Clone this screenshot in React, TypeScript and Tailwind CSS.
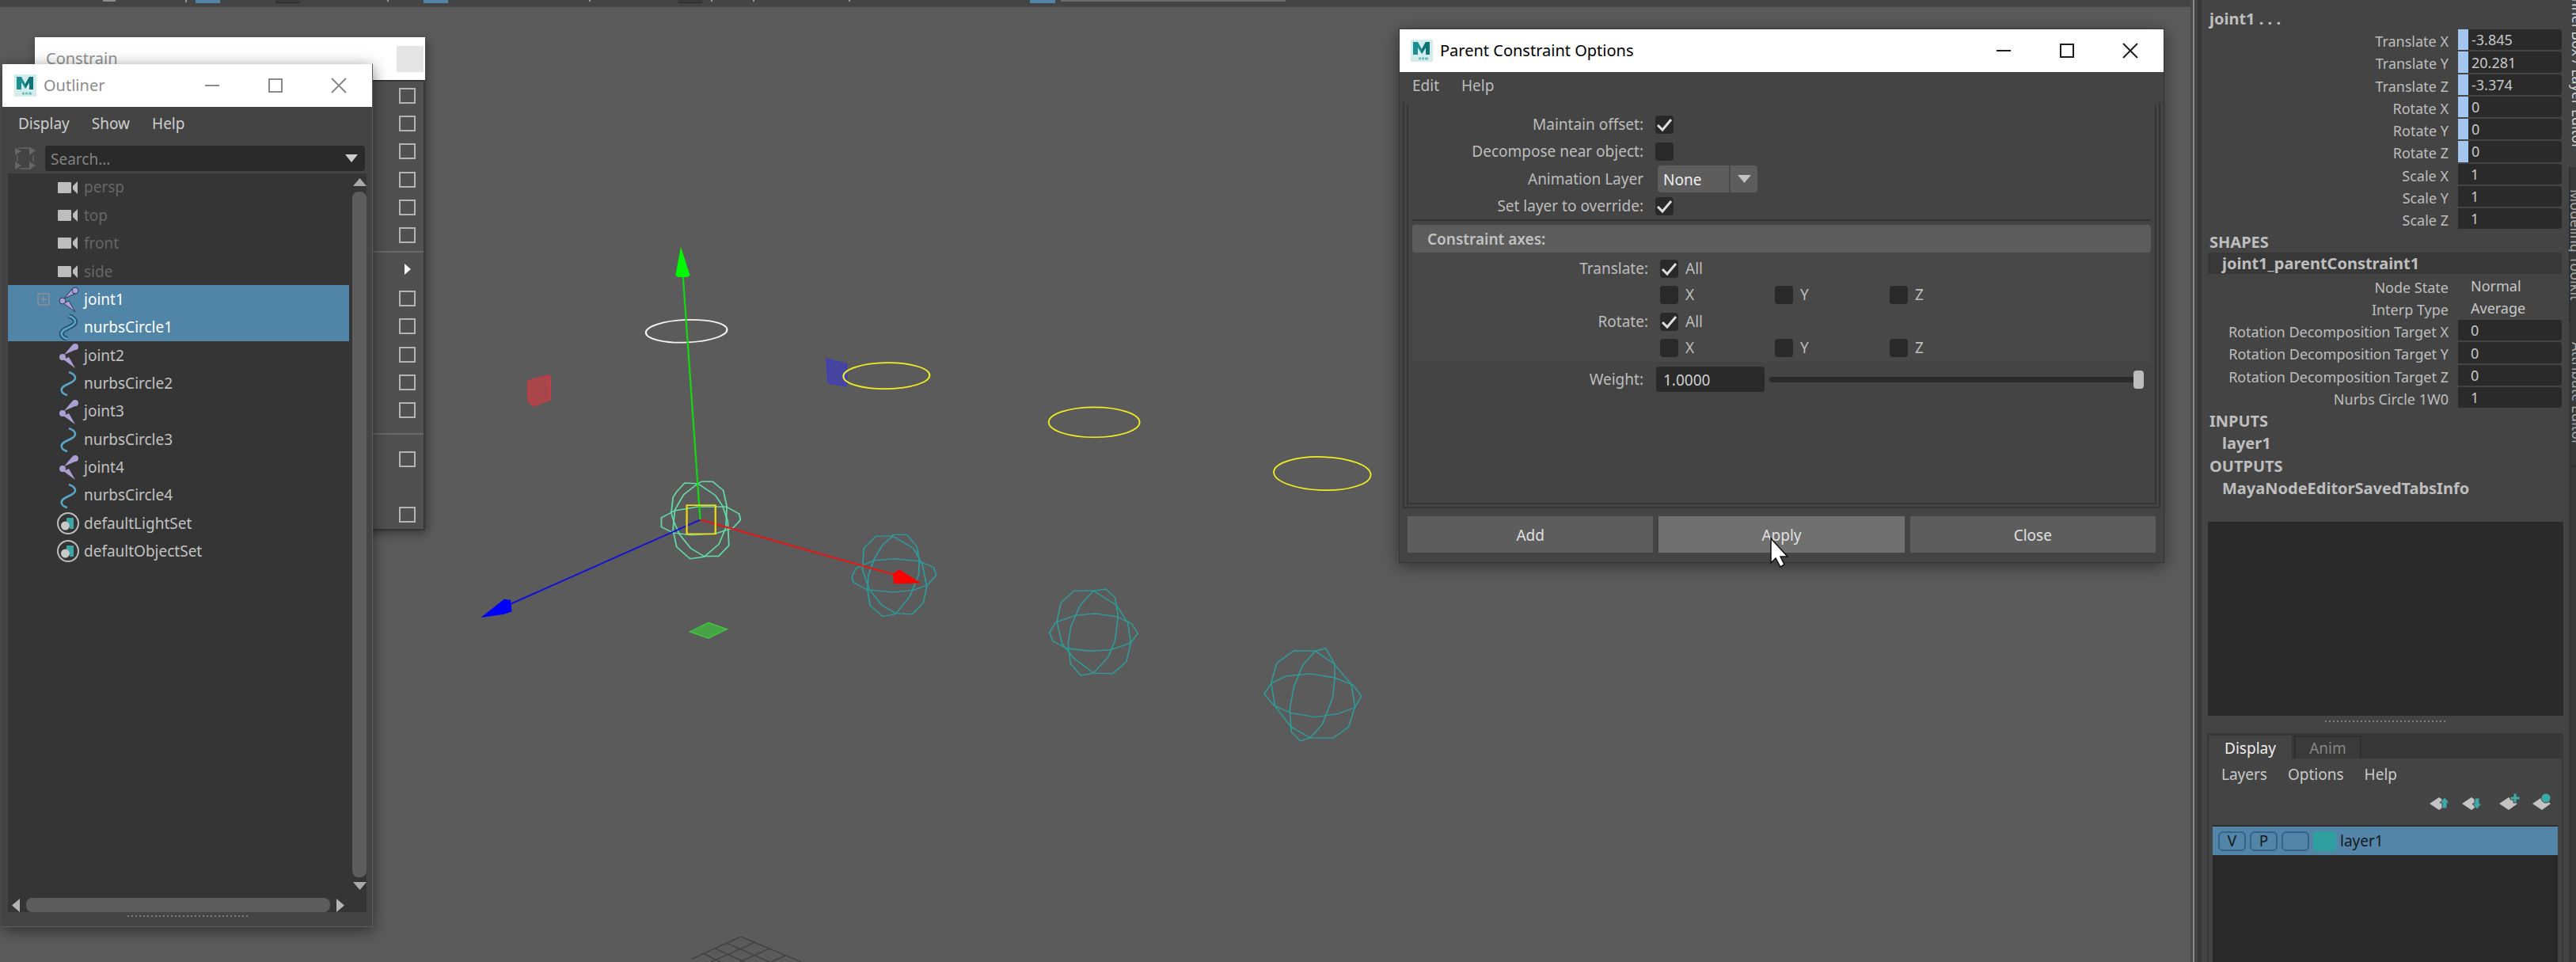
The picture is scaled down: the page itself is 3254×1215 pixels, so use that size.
import React from "react";

const NODES = [
  { name: "persp", kind: "camera" },
  { name: "top", kind: "camera" },
  { name: "front", kind: "camera" },
  { name: "side", kind: "camera" },
  { name: "joint1", kind: "joint", selected: true, expandable: true },
  { name: "nurbsCircle1", kind: "curve", selected: true },
  { name: "joint2", kind: "joint" },
  { name: "nurbsCircle2", kind: "curve" },
  { name: "joint3", kind: "joint" },
  { name: "nurbsCircle3", kind: "curve" },
  { name: "joint4", kind: "joint" },
  { name: "nurbsCircle4", kind: "curve" },
  { name: "defaultLightSet", kind: "set" },
  { name: "defaultObjectSet", kind: "set" },
];

function NodeIcon({ kind, selected }: { kind: string; selected?: boolean }) {
  if (kind === "camera")
    return (
      <svg className="h-[34px] w-7" viewBox="0 0 28 34" aria-hidden="true">
        <rect x="1" y="10" width="17" height="14" rx="1" fill="#bdbdbd" />
        <path d="M26 9v16l-6-6v-4z" fill="#bdbdbd" />
      </svg>
    );
  if (kind === "joint")
    return (
      <svg className="h-[34px] w-7" viewBox="0 0 28 34" aria-hidden="true">
        <g fill="#ab9fd4" stroke={selected ? "#2b3a55" : "none"} strokeWidth="1">
          <path d="M9 16L19 4l6 5z" />
          <path d="M8 22l7-3 8 14z" />
          <circle cx="23" cy="6" r="4" />
          <circle cx="7" cy="19" r="4" />
        </g>
      </svg>
    );
  if (kind === "curve")
    return (
      <svg className="h-[34px] w-7" viewBox="0 0 28 34" fill="none" aria-hidden="true">
        {selected && (
          <path d="M15 3c9 3 11 9 3 13l-8 4c-7 4-5 10 3 12" stroke="#25506e" strokeWidth="6" />
        )}
        <path d="M15 3c9 3 11 9 3 13l-8 4c-7 4-5 10 3 12" stroke="#5aa5c6" strokeWidth="2.6" />
      </svg>
    );
  return (
    <svg className="h-[34px] w-7" viewBox="0 0 28 34" aria-hidden="true">
      <circle cx="14" cy="17" r="13" fill="none" stroke="#bdbdbd" strokeWidth="2" />
      <path d="M12 10h9v14h-5c1-6-1-8-4-9z" fill="#3aa6a6" />
      <circle cx="10.500" cy="20" r="5.500" fill="#c9c9c9" />
    </svg>
  );
}

function MayaLogo() {
  return (
    <svg className="h-7 w-7 shrink-0" viewBox="0 0 28 28" aria-hidden="true">
      <rect width="28" height="28" fill="#d5ecec" />
      <path d="M3 3h6l5 9 5-9h5v16h-5v-9l-5 8-5-8v9H3z" fill="#1b8f90" />
      <path d="M19 3h5v16h-5v-9l-5 8v-6z" fill="#0f7377" />
      <path d="M10 24h3m1 0h3m1 0h4" stroke="#6fc0bf" strokeWidth="3" />
    </svg>
  );
}

function WindowButtons({ muted }: { muted?: boolean }) {
  const stroke = muted ? "#8a8a8a" : "#1c1c1c";
  return (
    <div className="ml-auto mr-[2px] flex h-full">
      <button type="button" aria-label="Minimize" className="flex h-full w-20 items-center justify-center">
        <svg className="h-5 w-5" viewBox="0 0 20 20" fill="none" stroke={stroke} strokeWidth="2">
          <path d="M1 10h18" />
        </svg>
      </button>
      <button type="button" aria-label="Maximize" className="flex h-full w-20 items-center justify-center">
        <svg className="h-5 w-5" viewBox="0 0 20 20" fill="none" stroke={stroke} strokeWidth="2">
          <rect x="2" y="2" width="16" height="16" />
        </svg>
      </button>
      <button type="button" aria-label="Close window" className="flex h-full w-20 items-center justify-center">
        <svg className="h-5 w-5" viewBox="0 0 20 20" fill="none" stroke={stroke} strokeWidth="2">
          <path d="M1 1l18 18M19 1L1 19" />
        </svg>
      </button>
    </div>
  );
}

function Dots() {
  return (
    <div className="h-[2px] w-[152px] bg-[repeating-linear-gradient(90deg,#7e7e7e_0_2px,transparent_2px_5px)]" />
  );
}

function OptionBox() {
  return (
    <button type="button" aria-label="Option box" className="flex flex-1 items-center">
      <span className="block h-5 w-[21px] border-2 border-[#b4b4b4]" />
    </button>
  );
}

function ConstrainMenu() {
  return (
    <section className="absolute left-11 top-[47px] flex h-[622px] w-[493px] flex-col bg-[#505050] shadow-[2px_4px_12px_rgba(0,0,0,0.4)]">
      <header className="flex h-[54px] shrink-0 items-center bg-white pl-[14px] text-[20px] text-[#929292]">
        <h2>Constrain</h2>
        <button type="button" aria-label="Close menu" className="ml-auto mr-[2px] h-[33px] w-[34px] bg-[#e5e5e5]" />
      </header>
      <div className="flex flex-1 flex-col border-b-2 border-r-2 border-t-2 border-[#363636]">
        <div className="flex h-[212px] flex-col items-end pr-[10px]">
          {[0, 1, 2, 3, 4, 5].map((i) => (
            <OptionBox key={i} />
          ))}
        </div>
        <div className="my-[2px] h-[2px] bg-[#686868]" />
        <div className="flex h-[38px] items-center justify-end pr-4">
          <svg className="h-[14px] w-[8px]" viewBox="0 0 8 14">
            <path d="M0 0l8 7-8 7z" fill="#f4f4f4" />
          </svg>
        </div>
        <div className="flex h-[177px] flex-col items-end pr-[10px]">
          {[0, 1, 2, 3, 4].map((i) => (
            <OptionBox key={i} />
          ))}
        </div>
        <div className="mb-[13px] mt-[11px] h-[2px] bg-[#686868]" />
        <div className="flex h-9 flex-col items-end pr-[10px]">
          <OptionBox />
        </div>
        <div className="mt-[34px] flex h-9 flex-col items-end pr-[10px]">
          <OptionBox />
        </div>
      </div>
    </section>
  );
}

function Outliner() {
  return (
    <section className="absolute left-[3px] top-[81px] flex h-[1090px] w-[468px] flex-col border-b border-r border-[#5e5e5e] bg-[#444] shadow-[0_4px_18px_rgba(0,0,0,0.5)]">
      <header className="flex h-[54px] shrink-0 items-center gap-[9px] bg-white pl-[15px] text-[20px] text-[#8c8c8c]">
        <MayaLogo />
        <h2>Outliner</h2>
        <WindowButtons muted />
      </header>
      <nav className="flex h-[43px] shrink-0 items-center gap-7 pl-5 text-[19px] text-[#cfcfcf]">
        <button type="button">Display</button>
        <button type="button">Show</button>
        <button type="button">Help</button>
      </nav>
      <div className="mr-[9px] mt-[6px] flex h-8 shrink-0 items-center gap-3 pl-4">
        <svg className="h-7 w-[26px]" viewBox="0 0 26 28" fill="#666" stroke="#666" aria-hidden="true">
          <path d="M0 1l8 4-8 5zM26 4l-8-4v10zM0 18l8 5-8 5zM26 23l-8-5v10z" stroke="none" />
          <path d="M4 1h16M6 27h14M3 10v8M23 10v8" fill="none" strokeWidth="1.500" />
        </svg>
        <div className="flex h-8 flex-1 items-center rounded bg-[#2a2a2a] pl-[7px] pr-[9px]">
          <input
            aria-label="Search"
            placeholder="Search..."
            className="min-w-0 flex-1 bg-transparent pt-[2px] text-[19px] text-[#ccc] outline-none placeholder:text-[#838383]"
          />
          <svg className="h-[10px] w-4" viewBox="0 0 16 10">
            <path d="M0 0h16l-8 10z" fill="#cdcdcd" />
          </svg>
        </div>
      </div>
      <div className="ml-[7px] mr-[7px] mt-[3px] flex flex-1 flex-col bg-[#353535]">
        <div className="flex flex-1 gap-1">
          <ul className="flex h-[495px] flex-1 flex-col text-[19px]">
            {NODES.map((n) => (
              <li
                key={n.name}
                className={
                  n.selected
                    ? "flex flex-1 items-center bg-[#5085a8] text-white"
                    : n.kind === "camera"
                      ? "flex flex-1 items-center text-[#666]"
                      : "flex flex-1 items-center text-[#c2c2c2]"
                }
              >
                <span className="flex w-[62px] pl-[37px]">
                  {n.expandable && (
                    <svg className="h-4 w-4" viewBox="0 0 16 16" fill="none" stroke="#8b9199" strokeWidth="1.500">
                      <rect x="1" y="1" width="14" height="14" />
                      <path d="M4 8h8M8 4v8" />
                    </svg>
                  )}
                </span>
                <NodeIcon kind={n.kind} selected={n.selected} />
                <span className="pl-[6px]">{n.name}</span>
              </li>
            ))}
          </ul>
          <div className="flex w-[18px] flex-col items-center pt-[6px]">
            <svg className="h-[10px] w-[17px]" viewBox="0 0 17 10">
              <path d="M0 10h17L8.500 0z" fill="#a9a9a9" />
            </svg>
            <div className="mb-[6px] mt-[7px] w-[18px] flex-1 rounded-lg bg-[#5d5d5d]" />
            <svg className="h-[10px] w-[17px]" viewBox="0 0 17 10">
              <path d="M0 0h17l-8.500 10z" fill="#a9a9a9" />
            </svg>
          </div>
        </div>
        <div className="mr-[28px] mt-[10px] flex h-[18px] items-center gap-2 pl-[5px]">
          <svg className="h-[17px] w-[10px]" viewBox="0 0 10 17">
            <path d="M10 0v17L0 8.500z" fill="#b4b4b4" />
          </svg>
          <div className="h-[18px] flex-1 rounded-lg bg-[#5d5d5d]" />
          <svg className="h-[17px] w-[10px]" viewBox="0 0 10 17">
            <path d="M0 0v17l10-8.500z" fill="#b4b4b4" />
          </svg>
        </div>
      </div>
      <div className="flex h-[18px] shrink-0 justify-center pt-1">
        <Dots />
      </div>
    </section>
  );
}

function CheckBox({ id, label, on }: { id: string; label: string; on?: boolean }) {
  return (
    <span className="relative block h-[23px] w-[23px] shrink-0">
      <input
        id={id}
        type="checkbox"
        aria-label={label}
        defaultChecked={on}
        className="peer block h-[23px] w-[23px] appearance-none rounded-sm bg-[#292929]"
      />
      <svg
        className="pointer-events-none absolute inset-0 hidden h-[23px] w-[23px] peer-checked:block"
        viewBox="0 0 23 23"
        fill="none"
        stroke="#dedede"
        strokeWidth="3"
      >
        <path d="M3 12l6 6L20 5" />
      </svg>
    </span>
  );
}

function AxisRows({ name }: { name: string }) {
  return (
    <>
      <div className="flex h-[34px] items-center">
        <label htmlFor={name + "-all"} className="mr-[15px] w-[298px] text-right">
          {name}:
        </label>
        <CheckBox id={name + "-all"} label={name + " all"} on />
        <span className="pl-[9px]">All</span>
      </div>
      <div className="flex h-[33px] items-center pl-[313px]">
        {["X", "Y", "Z"].map((axis) => (
          <div key={axis} className="flex w-[145px] items-center gap-[9px]">
            <CheckBox id={name + axis} label={name + " " + axis} />
            <label htmlFor={name + axis}>{axis}</label>
          </div>
        ))}
      </div>
    </>
  );
}

function ParentConstraintOptions() {
  return (
    <section className="absolute left-[1767px] top-9 flex h-[675px] w-[967px] flex-col border border-[#363636] bg-[#444] text-[19px] text-[#bdbdbd] shadow-[0_4px_20px_rgba(0,0,0,0.45)]">
      <header className="flex h-[54px] shrink-0 items-center gap-[9px] bg-white pl-[14px] text-[20px] text-black">
        <MayaLogo />
        <h2>Parent Constraint Options</h2>
        <WindowButtons />
      </header>
      <nav className="flex h-[38px] shrink-0 items-center gap-7 pb-[3px] pl-4">
        <button type="button">Edit</button>
        <button type="button">Help</button>
      </nav>
      <div className="mx-1 flex flex-1 flex-col border-x-2 border-b-2 border-[#343434] px-[3px] pb-[3px] pt-1">
        <div className="flex flex-1 flex-col border-x-2 border-b-2 border-[#343434] px-[5px] pt-[7px]">
          <div className="flex h-[34px] items-center">
            <label htmlFor="maintain" className="mr-[15px] w-[292px] text-right">Maintain offset:</label>
            <CheckBox id="maintain" label="Maintain offset" on />
          </div>
          <div className="flex h-[34px] items-center">
            <label htmlFor="decompose" className="mr-[15px] w-[292px] text-right">Decompose near object:</label>
            <CheckBox id="decompose" label="Decompose near object" />
          </div>
          <div className="flex h-9 items-center">
            <label htmlFor="anim-layer" className="mr-[18px] w-[292px] text-right">Animation Layer</label>
            <div className="relative h-[34px] w-[126px]">
              <select
                id="anim-layer"
                className="h-[34px] w-[126px] appearance-none rounded-sm bg-[#5d5d5d] pl-[7px] pt-[2px] text-[#efefef]"
              >
                <option>None</option>
              </select>
              <span className="pointer-events-none absolute right-0 top-0 flex h-[34px] w-9 items-center justify-center border-l-2 border-[#4a4a4a]">
                <svg className="h-[10px] w-[17px]" viewBox="0 0 17 10">
                  <path d="M0 0h17l-8.500 10z" fill="#c2c2c2" />
                </svg>
              </span>
            </div>
          </div>
          <div className="flex h-[33px] items-center">
            <label htmlFor="override" className="mr-[15px] w-[292px] text-right">Set layer to override:</label>
            <CheckBox id="override" label="Set layer to override" on />
          </div>
          <div className="h-[2px] bg-[#333]" />
          <h3 className="mt-[5px] flex h-[35px] items-center rounded-sm bg-[#5c5c5c] pl-[19px] pt-[1px] font-semibold text-[#c2c2c2]">
            Constraint axes:
          </h3>
          <div className="bg-[#484848] pb-[1px] pt-[3px]">
            <AxisRows name="Translate" />
            <AxisRows name="Rotate" />
          </div>
          <div className="mt-[5px] flex h-[34px] items-center">
            <label htmlFor="weight" className="mr-4 w-[292px] text-right">Weight:</label>
            <input
              id="weight"
              defaultValue="1.0000"
              className="h-8 w-[137px] rounded bg-[#2a2a2a] pl-[9px] pt-[2px] text-[#cfcfcf] outline-none"
            />
            <input
              type="range"
              aria-label="Weight slider"
              defaultValue={100}
              className="ml-[6px] mr-[9px] h-[23px] flex-1 appearance-none bg-transparent [&::-webkit-slider-runnable-track]:h-[7px] [&::-webkit-slider-runnable-track]:rounded [&::-webkit-slider-runnable-track]:bg-[#2a2a2a] [&::-webkit-slider-thumb]:-mt-[8px] [&::-webkit-slider-thumb]:h-[23px] [&::-webkit-slider-thumb]:w-[13px] [&::-webkit-slider-thumb]:appearance-none [&::-webkit-slider-thumb]:rounded [&::-webkit-slider-thumb]:bg-[#bdbdbd]"
            />
          </div>
        </div>
      </div>
      <footer className="mx-[10px] mb-3 mt-[10px] flex h-[46px] shrink-0 gap-[7px] text-[#e0e0e0]">
        <button type="button" className="flex-1 bg-[#5d5d5d] pt-[2px]">Add</button>
        <button type="button" className="flex-1 bg-[#707070] pt-[2px]">Apply</button>
        <button type="button" className="flex-1 bg-[#5d5d5d] pt-[2px]">Close</button>
      </footer>
      <svg className="pointer-events-none absolute left-[468px] top-[642px] h-[38px] w-6" viewBox="0 0 24 38" aria-hidden="true">
        <path d="M1 1v31l6-6 6 11 5-3-5-10h9z" fill="#fff" stroke="#111" strokeWidth="1.500" />
      </svg>
    </section>
  );
}

function Scene() {
  return (
    <svg className="absolute left-0 top-0 h-[1215px] w-[2767px]" viewBox="0 0 2767 1215" fill="none" aria-hidden="true">
      <g stroke="#434343" strokeWidth="1.500">
        <path d="M936 1183l76 32M918 1191l54 24M903 1198l38 17M888 1204l22 11M936 1183l-62 28M954 1190l-56 25M972 1198l-38 17M992 1207l-18 8" />
      </g>
      <svg x="560" y="280" width="700" height="560" viewBox="0 0 1568 1568" preserveAspectRatio="none">
        <g strokeWidth="4" stroke="#64dba6">
          <path d="M617 1047L655 1022L720 1008H800L837 1033L841 1055L820 1083L770 1103L700 1108L650 1100L617 1080Z" />
          <path d="M683 924L720 926L770 968L790 1005L805 1060L808 1145L779 1183H738L700 1155L668 1105L652 1060L645 1030L650 975L660 955Z" />
          <path d="M732 919H762L792 950L802 1005L800 1080L780 1140L738 1185L698 1192L660 1150L650 1090L655 1020L680 965L720 926Z" />
        </g>
        <g strokeWidth="4" stroke="#2f9a9a">
          <path d="M1156 1255L1168 1225L1218 1198L1275 1192L1345 1200L1387 1222L1395 1250L1370 1285L1330 1303L1272 1310L1200 1302L1160 1275Z" />
          <path d="M1224 1112H1272L1330 1155L1355 1210L1368 1290L1358 1348L1327 1388L1280 1385L1240 1355L1205 1300L1186 1230L1190 1155Z" />
          <path d="M1272 1107H1312L1340 1150L1347 1200L1345 1250L1320 1325L1280 1387L1243 1396L1208 1358L1200 1300L1203 1250L1220 1190L1245 1140L1272 1112Z" />
        </g>
        <ellipse cx="688" cy="387" rx="115" ry="40" transform="rotate(-3 688 387)" stroke="#f2f2f2" strokeWidth="5" />
        <path d="M240 562L298 543L303 552V630L255 652L240 635Z" fill="#a8464a" stroke="#d63a3e" strokeWidth="3" />
        <path d="M1084 485L1141 502V582L1089 570Z" fill="#4646a0" stroke="#3a3ad0" strokeWidth="3" />
        <path d="M697 1450L750 1418L803 1441L750 1473Z" fill="#46a346" stroke="#3fd03f" strokeWidth="3" />
        <g stroke="#eeee22" strokeWidth="5">
          <ellipse cx="1254" cy="545" rx="122" ry="46" transform="rotate(-1 1254 545)" />
        </g>
        <path d="M678 190L727 1054" stroke="#12d812" strokeWidth="5" />
        <path d="M672 88L657 190L664 196H690L698 190Z" fill="#00f800" />
        <path d="M727 1054L190 1352" stroke="#1010dc" strokeWidth="5" />
        <path d="M106 1400L172 1335L190 1338L194 1378L172 1388Z" fill="#0000fa" />
        <path d="M727 1054L1280 1250" stroke="#f01010" strokeWidth="5" />
        <path d="M1290 1230L1352 1278L1275 1280L1272 1245Z" fill="#fc0000" />
        <path d="M689 1003H770V1104H689Z" stroke="#ecdc10" strokeWidth="5" />
      </svg>
      <svg x="1200" y="420" width="600" height="540" viewBox="0 0 1568 1568" preserveAspectRatio="none">
        <g stroke="#eeee22" strokeWidth="5">
          <ellipse cx="476" cy="329" rx="150" ry="55" />
          <ellipse cx="1229" cy="517" rx="160" ry="61" transform="rotate(2 1229 517)" />
        </g>
        <g strokeWidth="4" stroke="#2f9e9b">
          <path d="M328 1100L350 1062L415 1037L480 1031L552 1042L600 1068L620 1103L597 1138L530 1164L460 1168L385 1158L340 1132Z" />
          <path d="M410 947H474L550 1000L587 1065L597 1138L582 1208L537 1251L474 1249L410 1195L370 1140L353 1060L366 992Z" />
          <path d="M474 947L515 941L545 972L555 1040L545 1130L522 1190L474 1249L432 1257L398 1215L390 1140L400 1075L430 1000Z" />
          <path d="M1037 1326L1062 1285L1110 1260L1190 1251L1270 1266L1330 1292L1358 1333L1337 1375L1282 1398L1205 1410L1125 1395L1070 1368Z" />
          <path d="M1135 1167L1206 1168L1268 1215L1325 1290L1337 1372L1316 1446L1265 1487H1190L1125 1445L1073 1370L1060 1285L1079 1212Z" />
          <path d="M1206 1168L1240 1158L1270 1215V1270L1263 1340L1230 1435L1190 1486L1157 1498L1127 1465L1122 1380L1135 1300L1165 1220Z" />
        </g>
      </svg>
    </svg>
  );
}

const TRANSFORM = [
  ["Translate X", "-3.845"],
  ["Translate Y", "20.281"],
  ["Translate Z", "-3.374"],
  ["Rotate X", "0"],
  ["Rotate Y", "0"],
  ["Rotate Z", "0"],
  ["Scale X", "1"],
  ["Scale Y", "1"],
  ["Scale Z", "1"],
];

const TARGETS = [
  ["Rotation Decomposition Target X", "0"],
  ["Rotation Decomposition Target Y", "0"],
  ["Rotation Decomposition Target Z", "0"],
  ["Nurbs Circle 1W0", "1"],
];

function Channel({ label, value, keyed, plain }: { label: string; value: string; keyed?: boolean; plain?: boolean }) {
  return (
    <div className="flex min-h-0 items-stretch pb-[2px] pr-[2px]">
      <label htmlFor={label} className="mr-3 flex-1 whitespace-nowrap pt-1 text-right">
        {label}
      </label>
      {keyed && <span className="w-[13px] bg-[#a2c6f0]" />}
      <input
        id={label}
        defaultValue={value}
        className={
          keyed
            ? "min-h-0 w-[118px] rounded-r-sm bg-[#2a2a2a] pl-1 text-[#c8c8c8] outline-none"
            : plain
              ? "min-h-0 w-[131px] bg-transparent pl-4 text-[#c8c8c8] outline-none"
              : "min-h-0 w-[131px] rounded-r-sm bg-[#2a2a2a] pl-4 text-[#c8c8c8] outline-none"
        }
      />
    </div>
  );
}

function Heading({ children }: { children: React.ReactNode }) {
  return <h2 className="min-h-0 pl-[2px] pt-1 text-[20px] font-bold">{children}</h2>;
}

function NodeHeading({ children }: { children: React.ReactNode }) {
  return <h3 className="min-h-0 pl-[18px] pt-1 text-[20px] font-bold">{children}</h3>;
}

function LayerIcon({ children }: { children: React.ReactNode }) {
  return (
    <svg className="h-6 w-[26px]" viewBox="0 0 26 24" aria-hidden="true">
      <path d="M0 13l12-8 11 8-11 8z" fill="#c4c4c4" />
      {children}
    </svg>
  );
}

function ChannelBox() {
  return (
    <aside className="flex w-[487px] shrink-0 bg-[#444] text-[18px] leading-[22px] text-[#bebebe]">
      <div className="w-[3px] bg-[#4a4a4a]" />
      <div className="w-[2px] bg-[#8a8a8a]" />
      <div className="w-1" />
      <div className="w-[5px] bg-[#373737]" />
      <div className="flex min-w-0 flex-1 flex-col pl-[7px] pr-[7px]">
        <div className="ml-[1px] mt-[9px] grid h-[621px] shrink-0 auto-rows-fr">
          <Heading>joint1 . . .</Heading>
          {TRANSFORM.map(([label, value], i) => (
            <Channel key={label} label={label} value={value} keyed={i < 6} />
          ))}
          <Heading>SHAPES</Heading>
          <div className="min-h-0 pb-[2px] pr-[2px]">
            <h3 className="h-full bg-[#383838] pl-[18px] pt-[3px] text-[20px] font-bold">joint1_parentConstraint1</h3>
          </div>
          <Channel label="Node State" value="Normal" plain />
          <Channel label="Interp Type" value="Average" plain />
          {TARGETS.map(([label, value]) => (
            <Channel key={label} label={label} value={value} />
          ))}
          <Heading>INPUTS</Heading>
          <NodeHeading>layer1</NodeHeading>
          <Heading>OUTPUTS</Heading>
          <NodeHeading>MayaNodeEditorSavedTabsInfo</NodeHeading>
        </div>
        <div className="ml-[1px] mt-[29px] h-[245px] shrink-0 bg-[#2a2a2a]" />
        <div className="flex h-[22px] shrink-0 justify-center pt-[6px]">
          <Dots />
        </div>
        <div className="flex min-h-0 flex-1 flex-col border-x-2 border-[#363636] text-[19px]">
          <div className="flex h-8 shrink-0 bg-[#373737] pt-[3px]" role="tablist">
            <button type="button" role="tab" aria-selected="true" className="w-[105px] bg-[#444] pt-[2px] text-[#eee]">
              Display
            </button>
            <button type="button" role="tab" aria-selected="false" className="ml-[3px] w-[85px] border-x-2 border-t-2 border-[#2f2f2f] bg-[#3a3a3a] text-[#858585]">
              Anim
            </button>
          </div>
          <nav className="flex h-10 shrink-0 items-center gap-[26px] pl-4 text-[#cacaca]">
            <button type="button">Layers</button>
            <button type="button">Options</button>
            <button type="button">Help</button>
          </nav>
          <div className="flex h-11 shrink-0 items-start justify-end pr-[11px] pt-1">
            <button type="button" aria-label="Move layer up" className="mr-[15px]">
              <LayerIcon>
                <path d="M19 5l6 7h-3v7h-6v-7h-3z" fill="#3fa9a9" stroke="#444" />
              </LayerIcon>
            </button>
            <button type="button" aria-label="Move layer down" className="mr-[21px]">
              <LayerIcon>
                <path d="M19 20l6-7h-3V6h-6v7h-3z" fill="#3fa9a9" stroke="#444" />
              </LayerIcon>
            </button>
            <button type="button" aria-label="New empty layer" className="mr-4">
              <LayerIcon>
                <path d="M18 0h4v4h4v4h-4v4h-4V8h-4V4h4z" fill="#3fa9a9" stroke="#444" />
              </LayerIcon>
            </button>
            <button type="button" aria-label="New layer from selection">
              <LayerIcon>
                <circle cx="17" cy="6" r="6" fill="#3fa9a9" stroke="#444" />
              </LayerIcon>
            </button>
          </div>
          <div className="mx-[5px] flex-1 border-t-2 border-[#2c2c2c] bg-[#292929]">
            <div className="flex h-9 items-center gap-[5px] bg-[#5285a8] pl-[7px] text-[#16181a]">
              <button type="button" className="h-[25px] w-[35px] rounded-md border-2 border-[#33628a] leading-none">V</button>
              <button type="button" className="h-[25px] w-[35px] rounded-md border-2 border-[#33628a] leading-none">P</button>
              <button type="button" aria-label="Display type" className="h-[25px] w-[35px] rounded-md border-2 border-[#33628a]" />
              <span className="h-[25px] w-[29px] rounded bg-[#2fa09f]" />
              <span>layer1</span>
            </div>
          </div>
        </div>
      </div>
      <div className="flex w-[9px] shrink-0 flex-col items-start overflow-hidden bg-[#383838] text-[18px] text-[#a8a8a8]">
        <a href="#channel" className="flex h-[211px] w-[22px] shrink-0 justify-end whitespace-nowrap bg-[#444] pb-[22px] text-[#d4d4d4] [writing-mode:vertical-rl]">
          Channel Box / Layer Editor
        </a>
        <a href="#modeling" className="flex h-[196px] w-[22px] shrink-0 justify-center whitespace-nowrap border-y-2 border-[#2f2f2f] [writing-mode:vertical-rl]">
          Modeling Toolkit
        </a>
        <a href="#attributes" className="flex h-[183px] w-[22px] shrink-0 justify-center whitespace-nowrap border-b-2 border-[#2f2f2f] [writing-mode:vertical-rl]">
          Attribute Editor
        </a>
      </div>
    </aside>
  );
}

export default function App() {
  return (
    <div className="flex h-screen overflow-hidden bg-[#5b5b5b] font-['Noto_Sans','Open_Sans',sans-serif]">
      <main className="flex min-w-0 flex-1 flex-col">
        <div className="flex h-[9px] shrink-0 items-start border-b border-[#4c4c4c] bg-[#444]">
          <span className="ml-[130px] h-[2px] w-4 bg-[#8d8d8d]" />
          <span className="ml-[88px] h-[3px] w-[2px] bg-[#999]" />
          <span className="ml-[11px] h-1 w-[31px] bg-[#5285a8]" />
          <span className="ml-[70px] h-1 w-[31px] border-b border-[#282828] bg-[#3a3a3a]" />
          <span className="ml-[110px] h-[2px] w-[2px] bg-[#999]" />
          <span className="ml-11 h-1 w-[31px] bg-[#5285a8]" />
          <span className="ml-[178px] h-[2px] w-[2px] bg-[#999]" />
          <span className="ml-[111px] h-1 w-[30px] border-b border-[#282828] bg-[#3a3a3a]" />
          <span className="ml-[11px] h-[2px] w-[2px] bg-[#999]" />
          <span className="ml-[51px] h-[2px] w-[2px] bg-[#999]" />
          <span className="ml-[119px] h-[2px] w-[2px] bg-[#999]" />
          <span className="ml-[227px] h-1 w-8 bg-[#5285a8]" />
          <span className="ml-[7px] h-[2px] w-[284px] bg-[#6c6c6c]" />
        </div>
        <div className="flex-1" />
      </main>
      <ChannelBox />
      <Scene />
      <ConstrainMenu />
      <Outliner />
      <ParentConstraintOptions />
    </div>
  );
}
